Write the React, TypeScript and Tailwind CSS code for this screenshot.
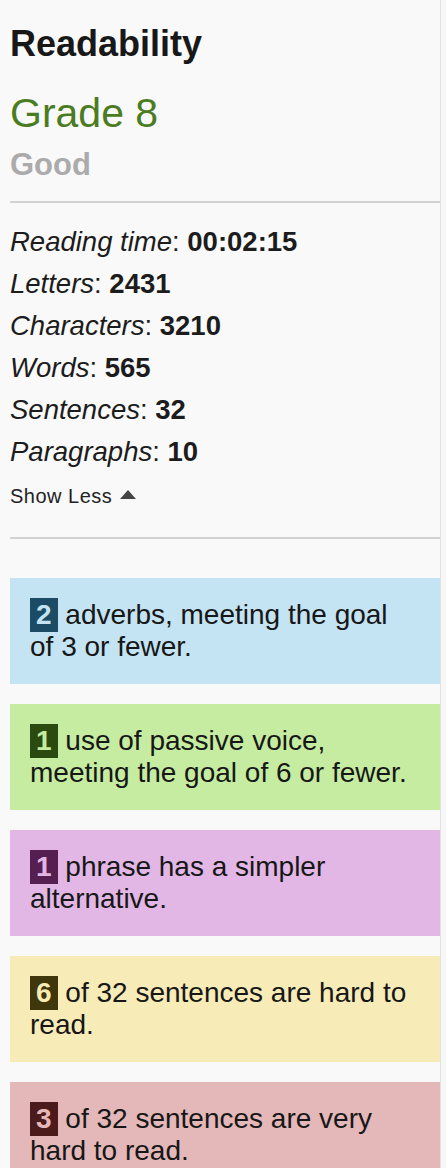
import React from "react";

interface StatRow {
  label: string;
  value: string;
}

interface Hint {
  count: number;
  text: string;
  bg: string;
  badge: string;
}

const stats: StatRow[] = [
  { label: "Reading time", value: "00:02:15" },
  { label: "Letters", value: "2431" },
  { label: "Characters", value: "3210" },
  { label: "Words", value: "565" },
  { label: "Sentences", value: "32" },
  { label: "Paragraphs", value: "10" },
];

// class strings written out so tailwind picks them up
const hints: Hint[] = [
  {
    count: 2,
    text: "adverbs, meeting the goal of 3 or fewer.",
    bg: "bg-[#c4e3f3]",
    badge: "bg-[#1c4b65] text-[#c4e3f3]",
  },
  {
    count: 1,
    text: "use of passive voice, meeting the goal of 6 or fewer.",
    bg: "bg-[#c5eca0]",
    badge: "bg-[#2a4a10] text-[#c5eca0]",
  },
  {
    count: 1,
    text: "phrase has a simpler alternative.",
    bg: "bg-[#e2b7e5]",
    badge: "bg-[#561f52] text-[#e2b7e5]",
  },
  {
    count: 6,
    text: "of 32 sentences are hard to read.",
    bg: "bg-[#f7ebb7]",
    badge: "bg-[#3f360b] text-[#f7ebb7]",
  },
  {
    count: 3,
    text: "of 32 sentences are very hard to read.",
    bg: "bg-[#e4b8b8]",
    badge: "bg-[#4b1b1b] text-[#e4b8b8]",
  },
];

const App: React.FC = () => {
  return (
    <div className="min-h-screen bg-[#f6f6f6] font-['Liberation_Sans',Arial,sans-serif] text-[#1c1c1c]">
      <div className="w-[441px] min-h-[1168px] bg-[#f9f9f9] border-r border-[#e2e2e2] pl-[10px] pt-6">
        <h2 className="text-[36px] leading-[40px] font-bold text-[#181818]">Readability</h2>
        <p className="mt-[25px] text-[41px] leading-[48px] text-[#4a7c22]">Grade 8</p>
        <p className="mt-[10px] text-[31px] leading-[36px] font-bold text-[#ababab]">Good</p>

        <div className="mt-[18px] border-t-2 border-[#d2d2d2]" />

        <div className="mt-[18px]">
          {stats.map((s) => (
            <div key={s.label} className="text-[27.5px] leading-[42px]">
              <span className="italic">{s.label}</span>: <span className="font-bold">{s.value}</span>
            </div>
          ))}
        </div>

        <button className="mt-[11px] flex items-center gap-[8px] text-[20px] leading-[24px] tracking-[0.5px] text-[#222]">
          Show Less
          <svg width="16" height="9" viewBox="0 0 16 9" className="mt-[-3px]">
            <path d="M8 0 L16 9 L0 9 Z" fill="#444" />
          </svg>
        </button>

        <div className="mt-[29px] border-t-2 border-[#d2d2d2]" />

        <div className="mt-[39px] flex flex-col gap-5">
          {hints.map((h, i) => (
            <div key={i} className={`${h.bg} pl-5 pr-7 py-[21px] text-[28px] leading-[32px] text-[#171717]`}>
              <span className={`${h.badge} inline-block font-bold px-[6px] py-[1px] my-[-1px] leading-[32px]`}>
                {h.count}
              </span>{" "}
              {h.text}
            </div>
          ))}
        </div>
      </div>
    </div>
  );
};

export default App;
